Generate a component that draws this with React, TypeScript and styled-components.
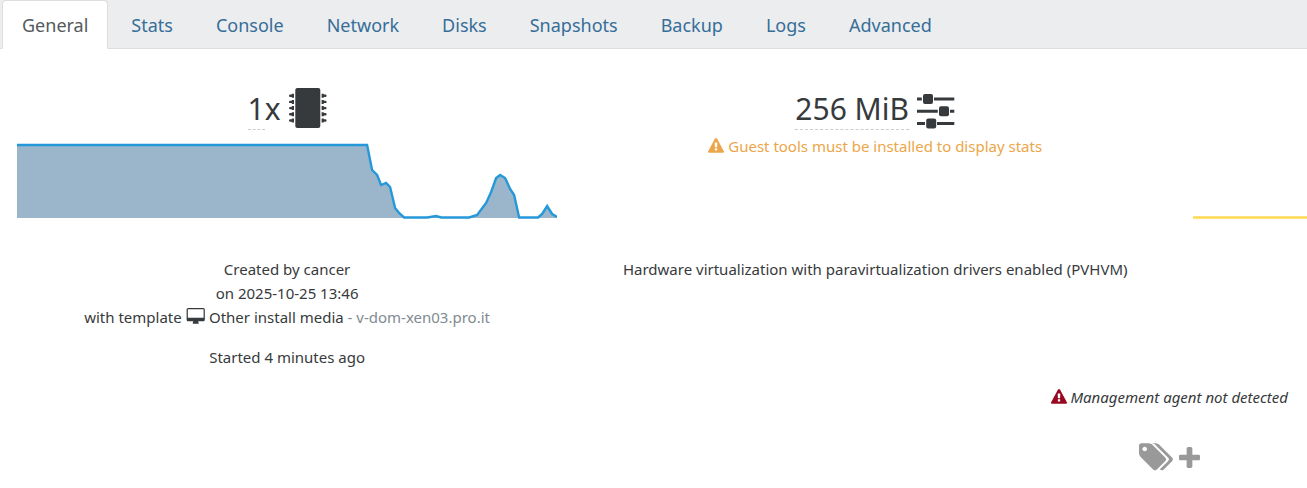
import React from "react";
import styled, { createGlobalStyle } from "styled-components";

const GlobalStyle = createGlobalStyle`
  *, *::before, *::after { box-sizing: border-box; }
  body {
    margin: 0;
    background: #fff;
    color: #373a3c;
    font-family: "Noto Sans", "Open Sans", sans-serif;
    font-size: 15px;
    line-height: 24px;
  }
`;

const Page = styled.main`
  overflow: hidden;
`;

const TabBar = styled.nav`
  display: flex;
  gap: 3px;
  height: 49px;
  padding-left: 2px;
  background: #ebedef;
  border-bottom: 1px solid #ddd;
`;

const Tab = styled.a<{ $active?: boolean }>`
  height: 49px;
  padding: 9px 19px;
  border: 1px solid ${(p) => (p.$active ? "#ddd" : "transparent")};
  border-bottom-color: ${(p) => (p.$active ? "#fff" : "transparent")};
  border-radius: 4px 4px 0 0;
  background: ${(p) => (p.$active ? "#fff" : "transparent")};
  background-clip: padding-box;
  color: ${(p) => (p.$active ? "#55595c" : "#366e98")};
  font-size: 18px;
  line-height: 30px;
  text-decoration: none;
  white-space: nowrap;
`;

const Content = styled.div`
  width: 180%;
  margin-left: -7px;
  padding-top: 37px;
`;

const Row = styled.section`
  display: grid;
  grid-template-columns: repeat(4, 1fr);
  text-align: center;
`;

const Column = styled.div`
  padding: 0 24px;
`;

const Glyph = styled.svg<{ $size?: number; $color?: string }>`
  height: ${(p) => p.$size ?? 16}px;
  color: ${(p) => p.$color ?? "inherit"};
  fill: currentColor;
  vertical-align: -2px;
  overflow: visible;
`;

const Heading = styled.h2`
  display: flex;
  justify-content: center;
  align-items: center;
  gap: 8px;
  height: 45px;
  margin: 0;
  font-size: 30px;
  font-weight: 400;
  line-height: 40px;

  ${Glyph} {
    margin-bottom: 2px;
  }
`;

const Editable = styled.span`
  border-bottom: 1px dashed #ccc;
`;

const Chart = styled.svg`
  display: block;
  width: 100%;
  height: 92px;
`;

const Notice = styled.p`
  margin: 0;
  padding-top: 3px;
  color: #eca649;
`;

const Details = styled(Row)`
  padding-top: 34px;
`;

const Line = styled.p`
  margin: 0;
`;

const Started = styled.p`
  margin: 16px 0 0;
`;

const Muted = styled.span`
  color: #818a91;
`;

const Agent = styled.p`
  margin: 16px 0 0;
  text-align: center;
  font-style: italic;
`;

const Tags = styled.div`
  display: flex;
  justify-content: center;
  align-items: center;
  gap: 6px;
  margin-top: 32px;
  color: #999;
`;

const AddButton = styled.button`
  display: flex;
  padding: 0;
  border: 0;
  background: none;
  color: inherit;
  cursor: pointer;
`;

const tabs = ["General", "Stats", "Console", "Network", "Disks", "Snapshots", "Backup", "Logs", "Advanced"];

const Warning = ({ color }: { color?: string }) => (
  <Glyph viewBox="0 0 1792 1792" $color={color} aria-hidden="true">
    <path d="M1024 1375v-190q0-14-9.5-23.5t-22.5-9.5h-192q-13 0-22.5 9.5t-9.5 23.5v190q0 14 9.5 23.5t22.5 9.5h192q13 0 22.5-9.5t9.5-23.5zm-2-374l18-459q0-12-10-19-13-11-24-11h-220q-11 0-24 11-10 7-10 21l17 457q0 10 10 16.5t24 6.5h185q14 0 23.5-6.5t10.5-16.5zm-14-934l768 1408q35 63-2 126-17 29-46.5 46t-63.5 17h-1536q-34 0-63.5-17t-46.5-46q-37-63-2-126l768-1408q17-31 47-49t65-18 65 18 47 49z" />
  </Glyph>
);

const Desktop = () => (
  <Glyph viewBox="0 0 2048 1792" $size={17} aria-hidden="true">
    <path d="M1856 992v-832q0-13-9.5-22.5t-22.5-9.5h-1600q-13 0-22.5 9.5t-9.5 22.5v832q0 13 9.5 22.5t22.5 9.5h1600q13 0 22.5-9.5t9.5-22.5zm128-832v1088q0 66-47 113t-113 47h-544q0 37 16 77.5t32 71 16 43.5q0 26-19 45t-45 19h-512q-26 0-45-19t-19-45q0-14 16-44t32-70 16-78h-544q-66 0-113-47t-47-113v-1088q0-66 47-113t113-47h1600q66 0 113 47t47 113z" />
  </Glyph>
);

const Chip = () => (
  <Glyph viewBox="0 0 38 40" $size={40} aria-hidden="true">
    <rect x="6.3" y="0" width="25" height="40" rx="2" />
    {[7.7, 13.9, 20.1, 26.3, 32.5].map((y) => (
      <path
        key={y}
        d={`M5 ${y - 2}v4h-2.2v-.8h-1.6q-1.2 0-1.2-1.2t1.2-1.2h1.6v-.8zM32.6 ${y - 2}v4h2.2v-.8h1.6q1.2 0 1.2-1.2t-1.2-1.2h-1.6v-.8z`}
      />
    ))}
  </Glyph>
);

const Sliders = () => (
  <Glyph viewBox="0 0 38 40" $size={40} aria-hidden="true">
    <path d="M0 9.5h4.8v3H0zM17 9.5h20.3v3H17zM0 21.8h20.8v3H0zM33 21.8h4.3v3H33zM0 34h8v3H0zM20 34h17.3v3H20z" />
    <rect x="6" y="6" width="10" height="10" rx="2" />
    <rect x="22" y="18.3" width="10" height="10" rx="2" />
    <rect x="9.2" y="30.5" width="10" height="10" rx="2" />
  </Glyph>
);

const TagsIcon = () => (
  <Glyph viewBox="0 0 1920 1792" $size={32} aria-hidden="true">
    <path d="M448 448q0-53-37.5-90.5t-90.5-37.5-90.5 37.5-37.5 90.5 37.5 90.5 90.5 37.5 90.5-37.5 37.5-90.5zm1067 576q0 53-37 90l-491 492q-39 37-91 37-53 0-90-37l-715-716q-38-37-64.5-101t-26.5-117v-416q0-52 38-90t90-38h416q53 0 117 26.5t102 64.5l715 714q37 39 37 91zm384 0q0 53-37 90l-491 492q-39 37-91 37-36 0-59-14t-53-45l470-470q37-37 37-90 0-52-37-91l-715-714q-38-38-102-64.5t-117-26.5h224q53 0 117 26.5t102 64.5l715 714q37 39 37 91z" />
  </Glyph>
);

const Plus = () => (
  <Glyph viewBox="192 128 1408 1408" $size={21} aria-hidden="true">
    <path d="M1600 736v192q0 40-28 68t-68 28h-416v416q0 40-28 68t-68 28h-192q-40 0-68-28t-28-68v-416h-416q-40 0-68-28t-28-68v-192q0-40 28-68t68-28h416v-416q0-40 28-68t68-28h192q40 0 68 28t28 68v416h416q40 0 68 28t28 68z" />
  </Glyph>
);

const cpuLine =
  "0,14 350,14 355,39 360,44 364,54 369,52 373,56 378,77 382,82 387,86.5 410,86.5 419,85 424,86.5 452,86.5 460,84 469,72 474,61 479,47 483,44 488,47 493,58 497,64 502,86.5 521,86.5 525,83 530,75 535,83 540,86";

export default function App() {
  return (
    <Page>
      <GlobalStyle />
      <TabBar aria-label="VM sections">
        {tabs.map((name, i) => (
          <Tab key={name} href="#" $active={i === 0}>
            {name}
          </Tab>
        ))}
      </TabBar>
      <Content>
        <Row>
          <Column>
            <Heading>
              <span><Editable>1</Editable>x</span>
              <Chip />
            </Heading>
            <Chart viewBox="0 0 540 92" preserveAspectRatio="none" role="img" aria-label="CPU usage">
              <polygon points={`0,87 ${cpuLine} 540,87`} fill="#9bb5cb" />
              <polyline points={cpuLine} fill="none" stroke="#2598d9" strokeWidth="2.4" />
            </Chart>
          </Column>
          <Column>
            <Heading>
              <span><Editable>256 MiB</Editable></span>
              <Sliders />
            </Heading>
            <Notice><Warning /> Guest tools must be installed to display stats</Notice>
          </Column>
          <Column>
            <Heading />
            <Chart viewBox="0 0 540 92" preserveAspectRatio="none" role="img" aria-label="Network throughput">
              <path d="M0 86.5H540" stroke="#ffd94f" strokeWidth="2.4" />
            </Chart>
          </Column>
        </Row>
        <Details>
          <Column>
            <Line>Created by cancer</Line>
            <Line>on 2025-10-25 13:46</Line>
            <Line>with template <Desktop /> Other install media <Muted>- v-dom-xen03.pro.it</Muted></Line>
            <Started>Started 4 minutes ago</Started>
          </Column>
          <Column>
            <Line>Hardware virtualization with paravirtualization drivers enabled (PVHVM)</Line>
          </Column>
        </Details>
        <Agent><Warning color="#990822" /> Management agent not detected</Agent>
        <Tags>
          <TagsIcon />
          <AddButton type="button" aria-label="Add tag"><Plus /></AddButton>
        </Tags>
      </Content>
    </Page>
  );
}
